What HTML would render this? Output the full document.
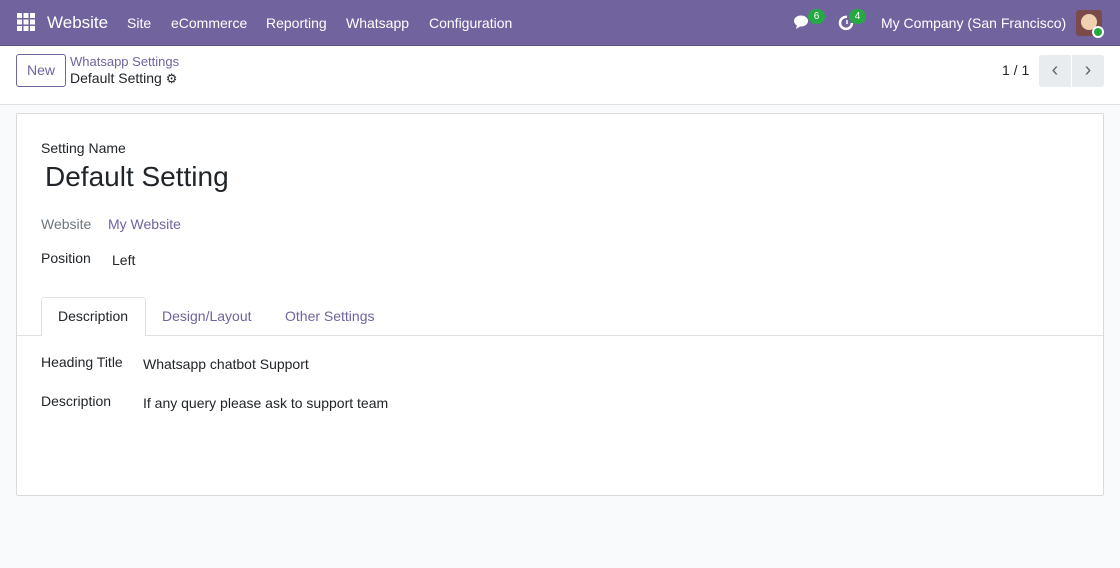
<!DOCTYPE html>
<html><head><meta charset="utf-8"><style>
*{box-sizing:border-box;margin:0;padding:0}
body{width:1120px;height:568px;background:#f9fafb;font-family:"Liberation Sans",Roboto,sans-serif;color:#212529;position:relative;overflow:hidden;font-size:14px}
.nav{position:absolute;left:0;top:0;width:1120px;height:46px;background:#71639e;color:#fff;border-bottom:1px solid #5e5287}
.nav span{position:absolute;top:15px;font-size:14px}
.cp{position:absolute;top:46px;left:0;width:1120px;height:59px;background:#fff;border-bottom:1px solid #dee2e6}
.sheet{position:absolute;left:16px;top:113px;width:1088px;height:383px;background:#fff;border:1px solid #d8dadd;border-radius:2px}
.t{position:absolute;white-space:nowrap}
.badge{position:absolute;background:#28a745;color:#fff;font-size:10px;border-radius:8px;width:17px;height:15px;text-align:center;line-height:15px}
</style></head><body>
<div class="nav">
<svg style="position:absolute;left:17px;top:13px" width="18" height="18" viewBox="0 0 18 18" fill="#fff"><rect x="0" y="0" width="5" height="5"/><rect x="6.5" y="0" width="5" height="5"/><rect x="13" y="0" width="5" height="5"/><rect x="0" y="6.5" width="5" height="5"/><rect x="6.5" y="6.5" width="5" height="5"/><rect x="13" y="6.5" width="5" height="5"/><rect x="0" y="13" width="5" height="5"/><rect x="6.5" y="13" width="5" height="5"/><rect x="13" y="13" width="5" height="5"/></svg>
<span style="left:47px;top:13px;font-size:17px">Website</span>
<span style="left:127px">Site</span><span style="left:171px">eCommerce</span><span style="left:266px">Reporting</span><span style="left:346px">Whatsapp</span><span style="left:429px">Configuration</span>
<svg style="position:absolute;left:794px;top:14px" width="18" height="16" viewBox="0 0 18 16" fill="#fff"><ellipse cx="7" cy="7" rx="7" ry="5.5"/><path d="M3 11 L2 15 L7 12Z"/></svg>
<div class="badge" style="left:808px;top:9px">6</div>
<svg style="position:absolute;left:838px;top:14px" width="18" height="18" viewBox="0 0 18 18" fill="none" stroke="#fff" stroke-width="2.5"><path d="M14 9A6 6 0 1 1 9 3"/><path d="M9 6V10" stroke-width="1.5"/></svg>
<div class="badge" style="left:849px;top:9px">4</div>
<span style="left:881px">My Company (San Francisco)</span>
<div style="position:absolute;left:1076px;top:10px;width:26px;height:26px;background:#7b4a4a;border-radius:3px"><div style="position:absolute;left:5px;top:4px;width:16px;height:16px;background:#f0d0b0;border-radius:50%"></div></div>
<div style="position:absolute;left:1092px;top:26px;width:12px;height:12px;background:#28a745;border-radius:50%;border:2px solid #fff"></div>
</div>
<div class="cp">
<div style="position:absolute;left:16px;top:8px;width:50px;height:33px;border:1px solid #71639e;border-radius:3px;color:#71639e;text-align:center;line-height:31px;font-size:14px">New</div>
<div class="t" style="left:70px;top:8px;color:#71639e;font-size:13px">Whatsapp Settings</div>
<div class="t" style="left:70px;top:24px;font-size:14px">Default Setting <span style="font-size:13px">⚙</span></div>
<div class="t" style="left:1002px;top:16px;font-size:14px">1 / 1</div>
<div style="position:absolute;left:1039px;top:9px;width:32px;height:32px;background:#e9ecef;border-radius:3px 0 0 3px;color:#666;text-align:center;line-height:30px;font-size:20px">‹</div>
<div style="position:absolute;left:1072px;top:9px;width:32px;height:32px;background:#e9ecef;border-radius:0 3px 3px 0;color:#666;text-align:center;line-height:30px;font-size:20px">›</div>
</div>
<div class="sheet">
<div class="t" style="left:24px;top:26px;font-size:14px">Setting Name</div>
<div class="t" style="left:28px;top:47px;font-size:28px">Default Setting</div>
<div class="t" style="left:24px;top:102px;color:#6c757d">Website</div>
<div class="t" style="left:91px;top:102px;color:#71639e">My Website</div>
<div class="t" style="left:24px;top:136px">Position</div>
<div class="t" style="left:95px;top:138px">Left</div>
<div style="position:absolute;left:0;top:221px;width:1086px;border-top:1px solid #dee2e6"></div>
<div style="position:absolute;left:24px;top:183px;width:105px;height:39px;background:#fff;border:1px solid #dee2e6;border-bottom:none;border-radius:3px 3px 0 0"></div>
<div class="t" style="left:41px;top:194px">Description</div>
<div class="t" style="left:145px;top:194px;color:#71639e">Design/Layout</div>
<div class="t" style="left:268px;top:194px;color:#71639e">Other Settings</div>
<div class="t" style="left:24px;top:240px">Heading Title</div>
<div class="t" style="left:126px;top:242px">Whatsapp chatbot Support</div>
<div class="t" style="left:24px;top:279px">Description</div>
<div class="t" style="left:126px;top:281px">If any query please ask to support team</div>
</div>
</body></html>
